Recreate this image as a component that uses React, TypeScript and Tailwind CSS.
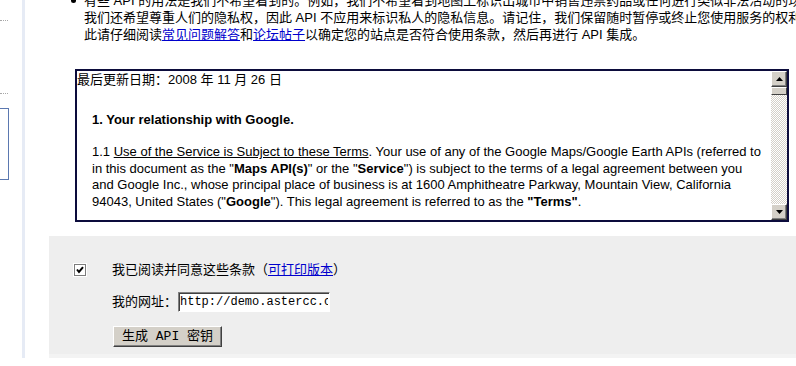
import React from 'react';

const cjk = '"Liberation Sans", "Noto Sans CJK SC", sans-serif';
const mono = '"Liberation Mono", "Noto Sans CJK SC", monospace';

function ScrollButton({ dir }: { dir: 'up' | 'down' }) {
  return (
    <div className="flex h-[16px] w-[16px] items-center justify-center border border-t-white border-l-white border-b-[#404040] border-r-[#404040] bg-[#d4d0c8] shadow-[inset_-1px_-1px_#808080]">
      <svg width="7" height="4" viewBox="0 0 7 4">
        {dir === 'up' ? (
          <polygon points="3.5,0 7,4 0,4" fill="#000" />
        ) : (
          <polygon points="0,0 7,0 3.5,4" fill="#000" />
        )}
      </svg>
    </div>
  );
}

function CheckBox() {
  return (
    <div className="flex h-[12px] w-[12px] items-center justify-center border border-[#7c7c7c] bg-white shadow-[0_0_0_1px_#ffffff]">
      <svg width="8" height="8" viewBox="0 0 8 8">
        <path d="M1 3.5 L3 6 L7 1.2" stroke="#000" strokeWidth="2" fill="none" />
      </svg>
    </div>
  );
}

export default function App() {
  return (
    <div className="flex h-[366px] w-[796px] overflow-hidden bg-white text-black" style={{ fontFamily: cjk }}>
      {/* left nav remnants */}
      <div className="w-[22px] shrink-0">
        <div className="mt-[20px] w-[8px] border-t border-dotted border-[#a8a8a8]" />
        <div className="mt-[72px] w-[8px] border-t border-dotted border-[#a8a8a8]" />
        <div className="mt-[14px] h-[72px] w-[9px] border border-l-0 border-[#5b78b0]" />
      </div>
      <div className="h-[358px] w-[3px] shrink-0 bg-[#e6ebf5]" />

      <div className="flex-1 min-w-0">
        <ul className="mt-[-8px] pl-[59px] text-[13px] leading-[17px]">
          <li className="relative whitespace-nowrap">
            <span className="absolute left-[-13px] top-[6px] h-[5px] w-[5px] rounded-full bg-black" />
            有些 API 的用法是我们不希望看到的。例如，我们不希望看到地图上标识出城市中销售违禁药品或任何进行类似非法活动的场所。
            <br />
            我们还希望尊重人们的隐私权，因此 API 不应用来标识私人的隐私信息。请记住，我们保留随时暂停或终止您使用服务的权利，因
            <br />
            此请仔细阅读<a href="#" className="text-[#0000cc] underline">常见问题解答</a>和<a href="#" className="text-[#0000cc] underline">论坛帖子</a>以确定您的站点是否符合使用条款，然后再进行 API 集成。
          </li>
        </ul>

        {/* terms box */}
        <div className="ml-[50px] mt-[26px] flex h-[153px] w-[714px] border-2 border-[#0c0c3c] bg-white">
          <div className="min-w-0 flex-1 overflow-hidden pt-[1px]">
            <div className="text-[13px] leading-[16px]">最后更新日期：2008 年 11 月 26 日</div>
            <h2 className="mt-[24px] pl-[15px] text-[13px] font-bold leading-[16px]" style={{ fontFamily: '"Liberation Sans", Arial, sans-serif' }}>
              1. Your relationship with Google.
            </h2>
            <p className="mt-[16px] whitespace-nowrap pl-[15px] text-[13px] leading-[16.5px]" style={{ fontFamily: '"Liberation Sans", Arial, sans-serif' }}>
              1.1 <u>Use of the Service is Subject to these Terms</u>. Your use of any of the Google Maps/Google Earth APIs (referred to
              <br />
              in this document as the "<b>Maps API(s)</b>" or the "<b>Service</b>") is subject to the terms of a legal agreement between you
              <br />
              and Google Inc., whose principal place of business is at 1600 Amphitheatre Parkway, Mountain View, California
              <br />
              94043, United States ("<b>Google</b>"). This legal agreement is referred to as the <b>"Terms"</b>.
            </p>
          </div>
          <div className="flex w-[16px] shrink-0 flex-col">
            <ScrollButton dir="up" />
            <div className="h-[8px] w-[16px] border border-t-white border-l-white border-b-[#404040] border-r-[#404040] bg-[#d4d0c8]" />
            <div className="flex-1 bg-[repeating-conic-gradient(#d4d0c8_0_25%,#ffffff_0_50%)] bg-[length:2px_2px]" />
            <ScrollButton dir="down" />
          </div>
        </div>

        {/* agreement form */}
        <div className="ml-[24px] mt-[14px] h-[122px] border-b-4 border-[#f3f3f3] bg-[#eeeeee] pt-[26px]">
          <div className="flex h-[16px] items-center">
            <div className="ml-[25px]">
              <CheckBox />
            </div>
            <span className="ml-[26px] text-[13px]">
              我已阅读并同意这些条款（<a href="#" className="text-[#0000cc] underline">可打印版本</a>）
            </span>
          </div>
          <div className="ml-[63px] mt-[14px] flex items-center">
            <span className="text-[13px]">我的网址：</span>
            <input
              readOnly
              value="http://demo.astercc.c"
              className="ml-[1px] h-[20px] w-[152px] border border-t-[#808080] border-l-[#808080] border-b-white border-r-white bg-white px-[1px] text-[12px] shadow-[inset_1px_1px_#404040] outline-none"
              style={{ fontFamily: mono }}
            />
          </div>
          <button
            className="ml-[64px] mt-[14px] h-[21px] w-[109px] border border-t-white border-l-white border-b-[#404040] border-r-[#404040] bg-[#d4d0c8] text-[13px] leading-[18px] shadow-[inset_-1px_-1px_#808080]"
            style={{ fontFamily: mono }}
          >
            生成 API 密钥
          </button>
        </div>
      </div>
    </div>
  );
}
